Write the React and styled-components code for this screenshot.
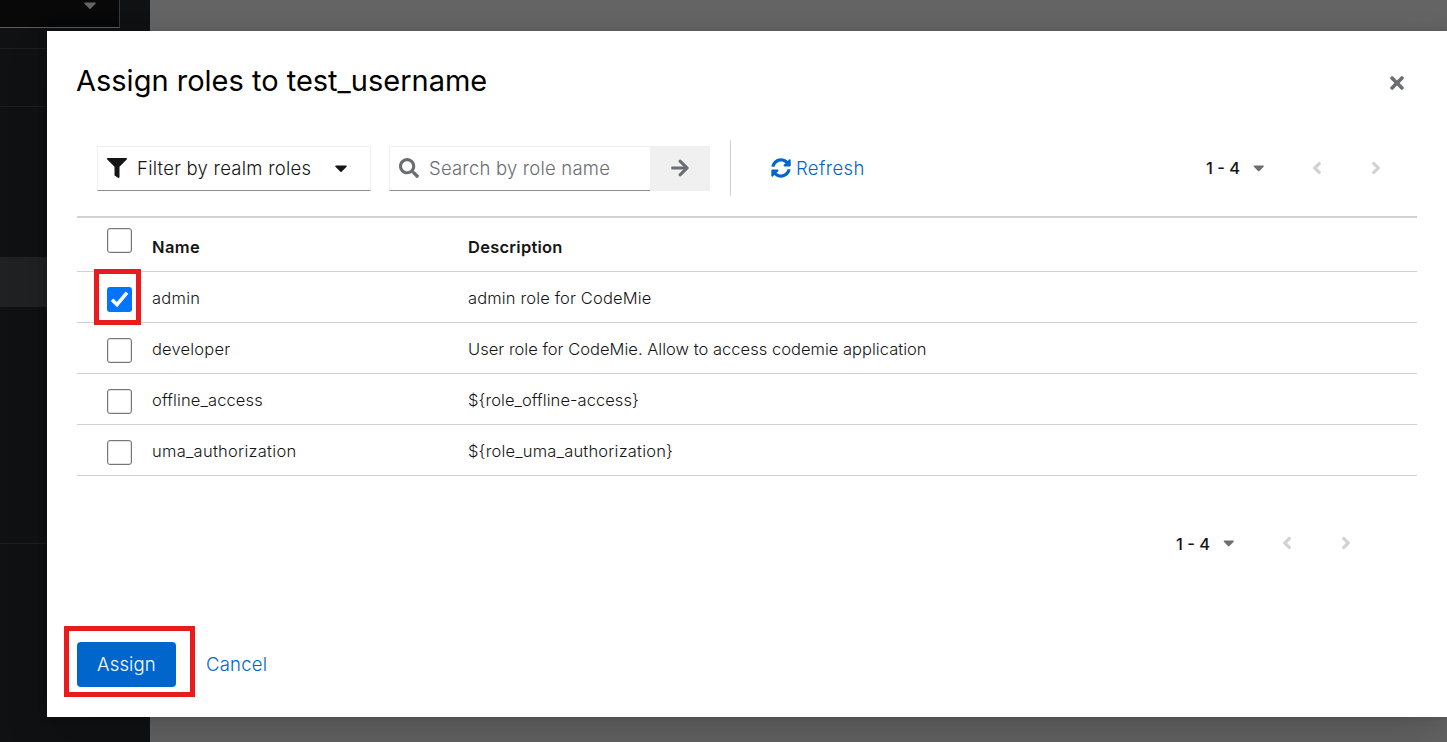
import React from "react";
import styled, { createGlobalStyle } from "styled-components";
import {
  FaAngleLeft,
  FaAngleRight,
  FaArrowRight,
  FaCaretDown,
  FaFilter,
  FaSearch,
  FaSyncAlt,
  FaTimes,
} from "react-icons/fa";

const GlobalStyle = createGlobalStyle`
  *, *::before, *::after { box-sizing: border-box; }
  body {
    margin: 0;
    overflow: hidden;
    font-family: "Inter", "Liberation Sans", sans-serif;
    color: #151515;
  }
  button, input { font: inherit; color: inherit; margin: 0; padding: 0; border: 0; background: none; }
  svg { display: block; flex: none; }
`;

const Page = styled.div`
  position: relative;
  display: flex;
  width: 1447px;
  height: 742px;
  overflow: hidden;
  background: #646464;
`;

const Sidebar = styled.aside`
  display: flex;
  flex-direction: column;
  width: 150px;
  height: 100%;
  background: #101113;
`;

const RealmPicker = styled.div`
  display: flex;
  justify-content: flex-end;
  width: 120px;
  height: 28px;
  padding-right: 19px;
  background: #080808;
  border-right: 1px solid #36383a;
  border-bottom: 1px solid #5a5a5a;
  color: #646464;
  svg { margin-top: -5px; }
`;

const NavGroup = styled.div`
  height: ${(p) => p.$height}px;
  border-bottom: 1px solid #1b1d20;
`;

const NavCurrent = styled.div`
  height: 50px;
  margin-top: 150px;
  background: #202123;
`;

const Modal = styled.section`
  position: absolute;
  left: 47px;
  top: 31px;
  display: flex;
  flex-direction: column;
  width: 1400px;
  height: 686px;
  padding: 30px;
  background: #fff;
  box-shadow: 0 20px 40px rgba(3, 3, 3, 0.16), 0 0 10px rgba(3, 3, 3, 0.1);
`;

const ModalHeader = styled.header`
  display: flex;
  justify-content: space-between;
  height: 79px;
`;

const Title = styled.h1`
  margin: 0 0 0 -1px;
  font-size: 29px;
  font-weight: 400;
  line-height: 39px;
  letter-spacing: ${(p) => p.$track}px;
  color: #000;
  white-space: nowrap;
`;

const CloseButton = styled.button`
  display: flex;
  align-items: center;
  justify-content: center;
  width: 40px;
  height: 44px;
  color: #6a6e73;
`;

const Label = styled.span`
  font-size: ${(p) => p.$size || 18.5}px;
  font-weight: ${(p) => p.$weight || 350};
  letter-spacing: ${(p) => p.$track || 0}px;
  line-height: 30px;
  white-space: nowrap;
`;

const Toolbar = styled.div`
  display: flex;
  align-items: center;
  height: 56px;
  padding: 0 11px 0 20px;
  margin-bottom: 20px;
`;

const FilterSelect = styled.button`
  display: flex;
  align-items: center;
  width: 274px;
  height: 45px;
  padding: 0 19px 0 9px;
  margin-right: 18px;
  border: 1px solid #f0f0f0;
  border-bottom-color: #8a8d90;
  ${Label} { flex: 1; margin-left: 10px; text-align: left; }
`;

const SearchField = styled.div`
  display: flex;
  align-items: center;
  gap: 10px;
  width: 261px;
  height: 45px;
  padding-left: 9px;
  border: 1px solid #f0f0f0;
  border-right: 0;
  border-bottom-color: #8a8d90;
  color: #6a6e73;
`;

const SearchButton = styled.button`
  display: flex;
  align-items: center;
  justify-content: center;
  width: 60px;
  height: 45px;
  background: #f0f0f0;
  color: #6a6e73;
`;

const Divider = styled.div`
  width: 1px;
  height: 56px;
  margin: 0 40px 0 20px;
  background: #d2d2d2;
`;

const LinkButton = styled.button`
  display: flex;
  align-items: center;
  gap: 5px;
  color: #06c;
`;

const Pager = styled.div`
  display: flex;
  align-items: center;
  width: 201px;
  height: 45px;
  margin-left: auto;
  margin-right: ${(p) => p.$inset || 0}px;
`;

const PagerCount = styled.div`
  display: flex;
  flex: none;
  align-items: center;
  justify-content: space-between;
  width: 61px;
  margin-left: 1px;
  svg { color: #6a6e73; }
`;

const PagerArrow = styled.button`
  display: flex;
  align-items: center;
  justify-content: center;
  width: 59.5px;
  height: 45px;
  color: #d2d2d2;
`;

const PagerArrows = styled.div`
  display: flex;
  flex: none;
  margin-left: 20px;
`;

const Table = styled.div`
  border-top: 2px solid #d2d2d2;
`;

const Row = styled.div`
  display: grid;
  grid-template-columns: 45px 316px 1fr;
  height: ${(p) => (p.$head ? 54 : 51)}px;
  padding-left: 30px;
  padding-top: ${(p) => (p.$head ? 14 : 11)}px;
  border-bottom: 1px solid #d2d2d2;
`;

const CheckCell = styled.div`
  position: relative;
  height: 25px;
  margin-top: ${(p) => (p.$head ? -4 : 4)}px;
`;

const Checkbox = styled.div`
  display: flex;
  align-items: center;
  justify-content: center;
  width: 25px;
  height: 25px;
  border: ${(p) => (p.$checked ? "0" : "1px solid #767676")};
  border-radius: 3px;
  background: ${(p) => (p.$checked ? "#0075ff" : "#fff")};
  box-shadow: ${(p) => (p.$checked ? "none" : "inset 0 0 0 0.5px #c8c8c8")};
`;

const Highlight = styled.div`
  position: absolute;
  left: ${(p) => p.$left}px;
  top: ${(p) => p.$top}px;
  width: ${(p) => p.$width}px;
  height: ${(p) => p.$height}px;
  border: 5px solid #e81c1e;
  pointer-events: none;
`;

const BottomBar = styled.div`
  display: flex;
  margin-top: 44px;
  ${Label} { margin-top: 2px; }
`;

const Footer = styled.footer`
  position: relative;
  display: flex;
  align-items: center;
  gap: 30px;
  margin-top: auto;
  ${Label} { display: block; margin-top: -1px; }
`;

const PrimaryButton = styled.button`
  width: 99px;
  height: 45px;
  border-radius: 4px;
  background: #06c;
  color: #fff;
`;

const roles = [
  { name: "admin", nameTrack: 0.25, desc: "admin role for CodeMie", descTrack: 0.14, checked: true },
  { name: "developer", nameTrack: 0.18, desc: "User role for CodeMie. Allow to access codemie application", descTrack: 0.02 },
  { name: "offline_access", nameTrack: 0.12, desc: "${role_offline-access}", descTrack: 0.06 },
  { name: "uma_authorization", nameTrack: 0.26, desc: "${role_uma_authorization}", descTrack: 0.19 },
];

function Pagination({ inset }) {
  return (
    <Pager $inset={inset}>
      <PagerCount>
        <Label $size={16.5} $weight={500}>1 - 4</Label>
        <FaCaretDown size={17.5} />
      </PagerCount>
      <PagerArrows>
        <PagerArrow aria-label="Previous"><FaAngleLeft size={20} /></PagerArrow>
        <PagerArrow aria-label="Next"><FaAngleRight size={20} /></PagerArrow>
      </PagerArrows>
    </Pager>
  );
}

export default function App() {
  return (
    <Page>
      <GlobalStyle />
      <Sidebar>
        <RealmPicker><FaCaretDown size={20} /></RealmPicker>
        <NavGroup $height={21} />
        <NavGroup $height={58} />
        <NavCurrent />
        <NavGroup $height={237} />
      </Sidebar>
      <Modal>
        <ModalHeader>
          <Title $track={0}>Assign roles to test_username</Title>
          <CloseButton aria-label="Close"><FaTimes size={20} /></CloseButton>
        </ModalHeader>
        <Toolbar>
          <FilterSelect>
            <FaFilter size={20} />
            <Label $track={0.25}>Filter by realm roles</Label>
            <FaCaretDown size={20} />
          </FilterSelect>
          <SearchField>
            <FaSearch size={20} />
            <Label $track={0.2}>Search by role name</Label>
          </SearchField>
          <SearchButton aria-label="Search"><FaArrowRight size={20} /></SearchButton>
          <Divider />
          <LinkButton>
            <FaSyncAlt size={20} />
            <Label $track={0.38}>Refresh</Label>
          </LinkButton>
          <Pagination />
        </Toolbar>
        <Table>
          <Row $head>
            <CheckCell $head><Checkbox /></CheckCell>
            <Label $size={16.5} $weight={600} $track={0.35}>Name</Label>
            <Label $size={16.5} $weight={600} $track={0.25}>Description</Label>
          </Row>
          {roles.map((role) => (
            <Row key={role.name}>
              <CheckCell>
                <Checkbox $checked={role.checked}>
                  {role.checked && (
                    <svg width="25" height="25" viewBox="0 0 25 25" fill="none" stroke="#fff" strokeWidth="3.6">
                      <path d="M5 12.7 10 17.6 20 5.6" />
                    </svg>
                  )}
                </Checkbox>
                {role.checked && <Highlight $left={-13} $top={-18} $width={47} $height={56} />}
              </CheckCell>
              <Label $size={16.5} $track={role.nameTrack}>{role.name}</Label>
              <Label $size={16.5} $track={role.descTrack}>{role.desc}</Label>
            </Row>
          ))}
        </Table>
        <BottomBar>
          <Pagination inset={41} />
        </BottomBar>
        <Footer>
          <PrimaryButton><Label $track={0.15}>Assign</Label></PrimaryButton>
          <LinkButton><Label $track={0.22}>Cancel</Label></LinkButton>
          <Highlight $left={-13} $top={-16} $width={131} $height={71} />
        </Footer>
      </Modal>
    </Page>
  );
}
